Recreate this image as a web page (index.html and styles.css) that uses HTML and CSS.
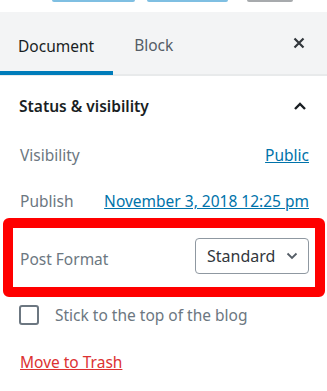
FILE: index.html
```html
<!DOCTYPE html>
<html lang="en">
<head>
    <meta charset="UTF-8">
    <meta name="viewport" content="width=device-width, initial-scale=1.0">
    <title>Document settings</title>
    <link rel="stylesheet" href="styles.css">
</head>
<body>
    <div class="top-strip">
        <span class="top-btn top-btn-blue first"></span>
        <span class="top-btn top-btn-blue second"></span>
        <span class="top-btn top-btn-grey"></span>
    </div>

    <div class="tabs">
        <div class="tab active">Document</div>
        <div class="tab tab-block">Block</div>
        <button class="close-btn" aria-label="Close settings">
            <svg width="12" height="12" viewBox="0 0 12 12">
                <path d="M1.5 1.5 L10.5 10.5 M10.5 1.5 L1.5 10.5" stroke="#32373c" stroke-width="2.2" fill="none"/>
            </svg>
        </button>
    </div>

    <div class="panel">
        <div class="section-title">
            <span>Status &amp; visibility</span>
            <svg width="12" height="8" viewBox="0 0 12 8">
                <path d="M1 7 L6 2 L11 7" stroke="#191e23" stroke-width="2.4" fill="none"/>
            </svg>
        </div>

        <div class="row row-visibility">
            <span class="label">Visibility</span>
            <a href="#" class="link">Public</a>
        </div>

        <div class="row row-publish">
            <span class="label">Publish</span>
            <a href="#" class="link">November 3, 2018 12:25 pm</a>
        </div>

        <div class="highlight">
            <div class="row row-format">
                <span class="label">Post Format</span>
                <div class="select">
                    <span>Standard</span>
                    <svg width="12" height="8" viewBox="0 0 12 8">
                        <path d="M1.5 1.5 L6 6 L10.5 1.5" stroke="#555d66" stroke-width="1.8" fill="none"/>
                    </svg>
                </div>
            </div>
        </div>

        <label class="row row-sticky">
            <span class="checkbox"></span>
            <span class="label">Stick to the top of the blog</span>
        </label>

        <a href="#" class="trash">Move to Trash</a>
    </div>
</body>
</html>
```

FILE: styles.css
```css
body {
    margin: 0;
    font-family: 'Noto Sans', sans-serif;
    font-size: 15.5px;
    background: white;
    color: #191e23;
}
.top-strip {
    height: 12px;
    position: relative;
}
.top-btn {
    position: absolute;
    top: 0;
    height: 2px;
    border-radius: 0 0 2px 2px;
}
.top-btn-blue {
    background: #7fbfe2;
}
.top-btn-blue.first {
    left: 52px;
    width: 83px;
}
.top-btn-blue.second {
    left: 147px;
    width: 81px;
}
.top-btn-grey {
    left: 247px;
    width: 46px;
    background: #a7aaad;
}
.tabs {
    display: flex;
    align-items: stretch;
    height: 62px;
    background: #f3f4f5;
    border-bottom: 2px solid #e8eaeb;
}
.tab {
    display: flex;
    align-items: center;
    padding: 4px 19px 0 18px;
    color: #555d66;
}
.tab.active {
    color: #191e23;
    box-shadow: inset 0 -4px 0 #007cba;
    margin-bottom: -1px;
}
.tab-block {
    padding-left: 21px;
}
.close-btn {
    margin-left: auto;
    margin-right: 22px;
    background: none;
    border: none;
    padding: 0;
    display: flex;
    align-items: center;
    cursor: pointer;
}
.section-title {
    display: flex;
    justify-content: space-between;
    align-items: center;
    height: 58px;
    padding: 2px 21px 0 19px;
    box-sizing: border-box;
    font-weight: 600;
}
.row {
    display: flex;
    justify-content: space-between;
    align-items: center;
    padding: 0 18px 0 20px;
}
.label {
    color: #6c7781;
}
.link {
    color: #0073aa;
}
.row-visibility {
    height: 42px;
}
.row-publish {
    height: 34px;
    padding-top: 8px;
}
.highlight {
    margin: 0 2px 0 3px;
    border: 10px solid #ff0000;
    border-radius: 6px;
}
.row-format {
    height: 59px;
    padding: 0 6px 0 7px;
}
.row-format .label {
    padding-top: 2px;
}
.select {
    display: flex;
    align-items: center;
    justify-content: space-between;
    box-sizing: border-box;
    width: 114px;
    height: 36px;
    margin-top: -4px;
    padding: 0 10px 0 11px;
    border: 1px solid #8f98a1;
    border-radius: 4px;
    font-size: 16px;
    color: #32373c;
}
.row-sticky {
    justify-content: flex-start;
    gap: 16px;
    height: 34px;
    padding-top: 1px;
    padding-left: 19px;
}
.checkbox {
    box-sizing: border-box;
    width: 20px;
    height: 20px;
    margin-top: -1px;
    border: 2px solid #6c7781;
    border-radius: 3px;
}
.trash {
    display: inline-block;
    margin: 19px 0 0 20px;
    line-height: 22px;
    color: #dc3232;
}
```
